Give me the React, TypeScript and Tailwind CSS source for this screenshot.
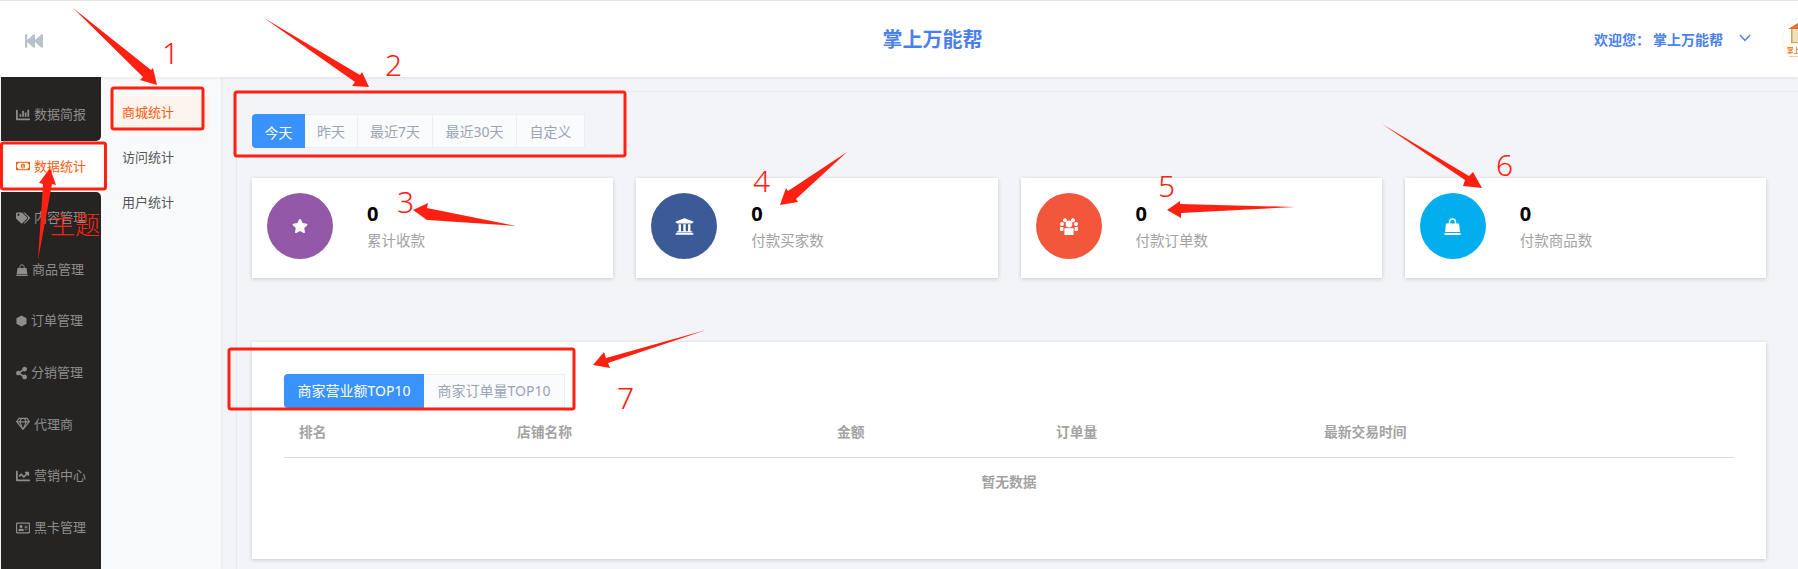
import type { ReactNode } from 'react';
import {
  FaChartBar,
  FaChartLine,
  FaFastBackward,
  FaRegAddressCard,
  FaRegGem,
  FaRegMoneyBillAlt,
  FaShareAlt,
  FaStar,
  FaTags,
  FaUniversity,
} from 'react-icons/fa';

function HexIcon() {
  return (
    <svg viewBox="0 0 12 12" width="11" height="12" fill="currentColor">
      <polygon points="6,0 11.5,3 11.5,9 6,12 0.5,9 0.5,3" />
    </svg>
  );
}

function BagIcon({ size = 12 }: { size?: number }) {
  return (
    <svg viewBox="0 0 16 17" width={size} height={size} fill="currentColor">
      <path d="M5 6V4a3 3 0 0 1 6 0v2" fill="none" stroke="currentColor" strokeWidth="1.4" />
      <path d="M1.5 5.5h13l1 8.5H.5z" />
      <rect x="0" y="15" width="16" height="2" />
    </svg>
  );
}

function GroupIcon() {
  return (
    <svg viewBox="0 0 18 17" width="18" height="17" fill="currentColor">
      <circle cx="5" cy="2.2" r="2" />
      <circle cx="13" cy="2.2" r="2" />
      <circle cx="2" cy="6" r="2" />
      <circle cx="16" cy="6" r="2" />
      <circle cx="9" cy="6" r="3.4" />
      <path d="M0 9h3.4v4H0zM14.6 9H18v4h-3.4z" />
      <path d="M4.4 10.2h9.2V17H4.4z" />
    </svg>
  );
}

const navItems = [
  { label: '数据简报', icon: <FaChartBar />, iconWidth: 'w-[14px]' },
  { label: '数据统计', icon: <FaRegMoneyBillAlt />, iconWidth: 'w-[14px]', active: true },
  { label: '内容管理', icon: <FaTags />, iconWidth: 'w-[14px]' },
  { label: '商品管理', icon: <BagIcon />, iconWidth: 'w-[12px]' },
  { label: '订单管理', icon: <HexIcon />, iconWidth: 'w-[11px]' },
  { label: '分销管理', icon: <FaShareAlt />, iconWidth: 'w-[11px]' },
  { label: '代理商', icon: <FaRegGem />, iconWidth: 'w-[14px]' },
  { label: '营销中心', icon: <FaChartLine />, iconWidth: 'w-[14px]' },
  { label: '黑卡管理', icon: <FaRegAddressCard />, iconWidth: 'w-[14px]' },
];

const stats = [
  { label: '累计收款', color: 'bg-[#9359a8]', icon: <FaStar className="text-[16px]" /> },
  { label: '付款买家数', color: 'bg-[#3d5a98]', icon: <FaUniversity className="text-[19px]" /> },
  { label: '付款订单数', color: 'bg-[#f2573c]', icon: <GroupIcon /> },
  { label: '付款商品数', color: 'bg-[#03aeee]', icon: <BagIcon size={17} /> },
];

function Tab({ children, active, className }: { children: ReactNode; active?: boolean; className: string }) {
  return (
    <div
      className={`flex items-center justify-center text-sm ${className} ${
        active ? 'bg-[#3a92fb] text-white' : 'bg-[#fafbfd] text-[#9aa5b8] border-y border-r border-[#eceef3]'
      }`}
    >
      {children}
    </div>
  );
}

function Mark({ x, y, children, size = 'text-[30px]' }: { x: string; y: string; children: ReactNode; size?: string }) {
  return (
    <span className={`absolute ${x} ${y} ${size} leading-none font-light text-[#ff2012] pointer-events-none`}>
      {children}
    </span>
  );
}

function Annotations() {
  return (
    <div className="absolute inset-0 z-20 pointer-events-none">
      <svg className="absolute inset-0" width="1798" height="569" fill="#ff2012">
        {/* boxes */}
        <g fill="none" stroke="#ff2012" strokeWidth="3">
          <rect x="1.5" y="143" width="104" height="46" rx="2" />
          <rect x="112" y="88" width="91" height="41" rx="2" />
          <rect x="235" y="92" width="390" height="64" rx="2" />
          <rect x="229" y="349" width="345" height="60" rx="2" />
        </g>
        {/* arrows */}
        <polygon points="73,8 151,70 153,68 157,85 140,80 143,77" />
        <polygon points="264,18 360,75 362,72 369,87 352,86 355,82" />
        <polygon points="38,260 43,184 39,183 50,168 56,185 52,184" />
        <polygon points="516,226 428,220 427,220 413,210 428,203 427,208" />
        <polygon points="847,152 796,199 798,202 780,205 786,188 788,191" />
        <polygon points="1295,207 1180,204 1180,201 1167,210 1181,218 1181,213" />
        <polygon points="1382,124 1469,176 1473,172 1482,188 1463,186 1465,180" />
        <polygon points="706,330 606,358 604,352 593,365 610,368 608,363" />
      </svg>
      <Mark x="left-[162px]" y="top-[38px]">1</Mark>
      <Mark x="left-[385px]" y="top-[50px]">2</Mark>
      <Mark x="left-[397px]" y="top-[187px]">3</Mark>
      <Mark x="left-[753px]" y="top-[166px]">4</Mark>
      <Mark x="left-[1158px]" y="top-[171px]">5</Mark>
      <Mark x="left-[1496px]" y="top-[150px]">6</Mark>
      <Mark x="left-[617px]" y="top-[383px]">7</Mark>
      <Mark x="left-[50px]" y="top-[212px]" size="text-[25px]">主题</Mark>
    </div>
  );
}

export default function App() {
  return (
    <div
      className="relative w-[1798px] h-[569px] overflow-hidden bg-[#f2f4f8] flex flex-col"
      style={{ fontFamily: '"Noto Sans", "Noto Sans CJK SC", sans-serif' }}
    >
      {/* Top bar */}
      <header className="relative z-10 h-[77px] shrink-0 bg-white border-t border-[#e6e6e6] shadow-[0_1px_4px_rgba(0,0,0,0.08)] flex items-center">
        <FaFastBackward className="ml-[25px] mt-[3px] text-[18px] text-[#b8c2cc]" />
        <div className="flex-1 text-center text-xl font-bold text-[#4a80ee] pl-[228px] pt-[2px]">掌上万能帮</div>
        <div className="flex gap-[3px] text-sm font-bold text-[#4a80ee] w-[129px] whitespace-nowrap pt-[2px]">
          <span>{'欢迎您\uFF1A'}</span>
          <span>掌上万能帮</span>
        </div>
        <svg className="ml-[16px] -mt-[2px] text-[#4a80ee]" width="12" height="8" viewBox="0 0 12 8" fill="none" stroke="currentColor" strokeWidth="1.5">
          <polyline points="1,1 6,6.5 11,1" />
        </svg>
        <div className="ml-[32px] mr-[-30px] w-[45px] h-[45px] shrink-0 rounded-full bg-white shadow-[0_0_3px_rgba(0,0,0,0.1)]">
          <svg width="45" height="45" viewBox="0 0 45 45">
            <rect x="8" y="12" width="22" height="14" fill="#f0dfb8" />
            <rect x="8" y="12" width="1.5" height="14" fill="#c8a860" />
            <rect x="8" y="25" width="22" height="1.2" fill="#c8a860" />
            <path d="M5 12 L15 6 L30 6 L30 12 Z" fill="#e0703a" />
            <text x="4" y="36" fontSize="6.5" fontWeight="700" fill="#ef7a2a">掌上</text>
            <rect x="6" y="39" width="10" height="1" fill="#f8c8a0" />
          </svg>
        </div>
      </header>

      <div className="flex-1 flex min-h-0">
        {/* Primary nav */}
        <nav className="ml-px w-[100px] shrink-0 bg-[#f8f9fb] flex flex-col">
          {navItems.map((item, i) => (
            <div
              key={item.label}
              className={`flex items-center gap-[4px] pl-[15px] text-[13px] ${
                item.active ? 'bg-white text-[#ff5a0a]' : 'bg-[#252423] text-[#8d8d8d]'
              } ${i === 0 ? 'rounded-br-[5px] h-[63.6px] pt-[12px]' : 'h-[51.6px]'} ${i === 2 ? 'rounded-tr-[5px]' : ''}`}
            >
              <span className={`${item.iconWidth} flex justify-center text-[14px]`}>{item.icon}</span>
              <span>{item.label}</span>
            </div>
          ))}
          <div className="flex-1 bg-[#252423]" />
        </nav>

        {/* Secondary nav */}
        <aside className="w-[120px] shrink-0 bg-[#f8f9fb] shadow-[1px_0_2px_rgba(0,0,0,0.05)] pt-[19px] text-[13px] text-[#555555]">
          <div className="ml-[9px] w-[100px] h-[33px] pl-[12px] flex items-center bg-[#fef4ee] text-[#ff5a0a]">商城统计</div>
          <div className="ml-[9px] mt-[12px] h-[33px] pl-[12px] flex items-center">访问统计</div>
          <div className="ml-[9px] mt-[12px] h-[33px] pl-[12px] flex items-center">用户统计</div>
        </aside>

        {/* Main */}
        <main className="flex-1 ml-[15px] mt-[14px] border-l border-t border-[#e8eaee] pl-[15px] pr-[32px] pt-[22px]">
          <div className="flex h-[34px] rounded-[4px] overflow-hidden">
            <Tab active className="w-[53px] pt-[3px]">今天</Tab>
            <Tab className="w-[53px] pt-[1px]">昨天</Tab>
            <Tab className="w-[75px] pt-[1px]">最近7天</Tab>
            <Tab className="w-[84px] pt-[1px]">最近30天</Tab>
            <Tab className="w-[68px] pt-[1px]">自定义</Tab>
          </div>

          <div className="mt-[30px] grid grid-cols-4 gap-[23px]">
            {stats.map((s) => (
              <div key={s.label} className="h-[100px] bg-white shadow-[0_1px_4px_rgba(0,0,0,0.18)] flex items-start pl-[15px] pt-[15px]">
                <div className={`w-[66px] h-[66px] rounded-full ${s.color} text-white flex items-center justify-center`}>
                  {s.icon}
                </div>
                <div className="ml-[34px] pt-[7px]">
                  <div className="text-[20px] leading-[28px] font-bold text-black">0</div>
                  <div className="mt-[1px] text-[14.5px] leading-[22px] text-[#a3a3a3]">{s.label}</div>
                </div>
              </div>
            ))}
          </div>

          <section className="mt-[64px] h-[217px] bg-white shadow-[0_1px_4px_rgba(0,0,0,0.18)] pt-[32px] px-[32px]">
            <div className="flex h-[34px] rounded-[4px] overflow-hidden">
              <Tab active className="w-[140px]">商家营业额TOP10</Tab>
              <Tab className="w-[141px]">商家订单量TOP10</Tab>
            </div>
            <table className="w-full table-fixed text-[13.75px]">
              <thead>
                <tr className="h-[49px] border-b border-[#dcdcdc] text-left font-bold text-[#a3a3a3]">
                  <th className="w-[218px] pl-[15px]">排名</th>
                  <th className="w-[320px] pl-[15px]">店铺名称</th>
                  <th className="w-[219px] pl-[15px]">金额</th>
                  <th className="w-[268px] pl-[15px]">订单量</th>
                  <th className="pl-[15px]">最新交易时间</th>
                </tr>
              </thead>
              <tbody>
                <tr>
                  <td colSpan={5} className="pt-[14px] text-center font-bold text-[#a3a3a3]">暂无数据</td>
                </tr>
              </tbody>
            </table>
          </section>
        </main>
      </div>

      <Annotations />
    </div>
  );
}
